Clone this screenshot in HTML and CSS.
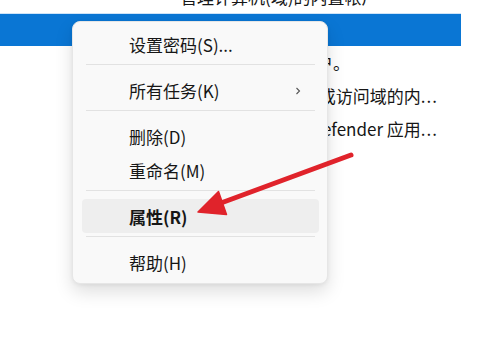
FILE: index.html
```html
<!DOCTYPE html>
<html lang="zh-CN">
<head>
<meta charset="utf-8">
<title>本地用户</title>
<link rel="stylesheet" href="styles.css">
</head>
<body>
<div class="list">
  <div class="row"><div class="desc">管理计算机(域)的内置帐户</div></div>
  <div class="row selected"><div class="desc"></div></div>
  <div class="row"><div class="desc">系统管理的用户帐户。</div></div>
  <div class="row"><div class="desc end">供来宾访问计算机或访问域的内<span class="dots">...</span></div></div>
  <div class="row"><div class="desc end">系统为 Windows Defender 应用<span class="dots">...</span></div></div>
</div>

<div class="menu">
  <div class="item">设置密码(S)...</div>
  <div class="sep"></div>
  <div class="item">所有任务(K)
    <svg class="chev" width="6" height="8" viewBox="0 0 6 8"><polyline points="1.5,1 4.5,4 1.5,7" fill="none" stroke="#555" stroke-width="1.1"/></svg>
  </div>
  <div class="sep"></div>
  <div class="item">删除(D)</div>
  <div class="item">重命名(M)</div>
  <div class="sep"></div>
  <div class="item hover strong">属性(R)</div>
  <div class="sep"></div>
  <div class="item">帮助(H)</div>
</div>

<svg class="arrow" width="480" height="360" viewBox="0 0 480 360">
  <line x1="351" y1="155" x2="221" y2="203" stroke="#e0232b" stroke-width="5" stroke-linecap="round"/>
  <polygon points="198,212 218.5,191.5 226.5,214.5" fill="#e0232b" stroke="#e0232b" stroke-width="1.5" stroke-linejoin="round"/>
</svg>
</body>
</html>
```
FILE: styles.css
```css
html, body {
  margin: 0;
  padding: 0;
  background: #ffffff;
  width: 480px;
  height: 360px;
  overflow: hidden;
  position: relative;
}

body {
  font-family: "Noto Sans CJK SC", "Noto Sans", sans-serif;
  color: #161616;
}

.list {
  margin-top: -20px;
  width: 461px;
}

.row {
  height: 33px;
  display: flex;
  align-items: center;
}

.row.selected {
  background: #0a76d4;
  box-shadow: inset 0 1px 0 #cfe4f8;
}

.desc {
  margin-left: 180px;
  width: 258px;
  font-size: 17px;
  white-space: nowrap;
  overflow: hidden;
  display: flex;
}

.desc.end {
  justify-content: flex-end;
}

.dots {
  letter-spacing: 1px;
}

.menu {
  position: absolute;
  left: 72px;
  top: 21px;
  width: 237px;
  padding: 5px 8px 4px 9px;
  background: #f9f9f9;
  border: 1px solid #e6e6e6;
  border-radius: 8px;
  box-shadow: 0 8px 18px rgba(0, 0, 0, 0.13), 0 1px 4px rgba(0, 0, 0, 0.06);
  font-size: 17px;
}

.item {
  height: 34px;
  display: flex;
  align-items: center;
  padding-left: 47px;
  border-radius: 4px;
  position: relative;
}

.item.hover {
  background: #eeeeee;
}

.item.strong {
  font-weight: 700;
}

.chev {
  position: absolute;
  right: 18px;
  top: 14px;
}

.sep {
  height: 1px;
  background: #e2e2e2;
  margin: 3px 4px 8px;
}

.arrow {
  position: absolute;
  left: 0;
  top: 0;
  pointer-events: none;
}
```
